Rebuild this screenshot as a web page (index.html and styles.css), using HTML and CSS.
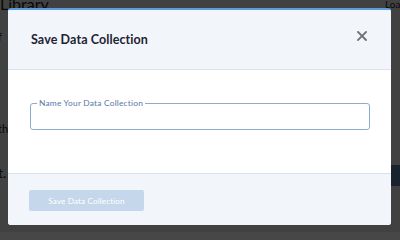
FILE: index.html
```html
<!DOCTYPE html>
<html>
<head>
<meta charset="utf-8">
<link rel="stylesheet" href="styles.css">
</head>
<body>
<div class="page">
  <div class="page-title">Library</div>
  <div class="page-load">Load</div>
  <div class="page-row r1">f</div>
  <div class="page-row r2">th</div>
  <div class="page-row r3">t.</div>
  <div class="page-block"></div>
</div>
<div class="overlay"></div>
<div class="modal">
  <div class="modal-header">
    <h2 class="modal-title">Save Data Collection</h2>
    <button class="close" aria-label="Close">
      <svg width="10" height="10" viewBox="0 0 10 10"><path d="M1 1L9 9M9 1L1 9" stroke="#707070" stroke-width="1.8" stroke-linecap="square"/></svg>
    </button>
  </div>
  <div class="modal-body">
    <fieldset class="field">
      <legend class="field-label">Name Your Data Collection</legend>
      <input class="field-input" type="text">
    </fieldset>
  </div>
  <div class="modal-footer">
    <button class="save-btn" disabled>Save Data Collection</button>
  </div>
</div>
</body>
</html>
```
FILE: styles.css
```css
html, body {
  margin: 0;
  padding: 0;
  width: 400px;
  height: 232px;
  overflow: hidden;
  font-family: Lato, "Open Sans", sans-serif;
}
.page {
  position: relative;
  width: 400px;
  height: 232px;
  background: #e8e8e8;
}
.page-title {
  position: absolute;
  left: 0;
  top: -6px;
  font-size: 16px;
  color: #222;
}
.page-load {
  position: absolute;
  right: -6px;
  top: -2px;
  font-size: 10px;
  color: #222;
}
.page-row {
  position: absolute;
  left: -2px;
  font-size: 11px;
  color: #222;
}
.r1 { top: 30px; }
.r2 { top: 122px; }
.r3 { top: 164px; font-size: 14px; }
.page-block {
  position: absolute;
  right: 0;
  top: 165px;
  width: 10px;
  height: 21px;
  background: #5a7aa8;
}
.overlay {
  position: absolute;
  inset: 0;
  background: rgba(0, 0, 0, 0.72);
}
.modal {
  position: absolute;
  left: 8px;
  top: 8px;
  width: 383px;
  height: 217px;
  border-top: 2px solid #5b9bdc;
  border-radius: 3px;
  background: #fff;
  display: flex;
  flex-direction: column;
  overflow: hidden;
  box-sizing: border-box;
}
.modal-header {
  height: 59px;
  background: #f2f5fa;
  border-bottom: 1px solid #dce2ea;
  display: flex;
  align-items: center;
  justify-content: space-between;
  padding: 0 24px 0 23px;
  box-sizing: content-box;
  flex: none;
}
.modal-title {
  margin: 0;
  font-size: 12.5px;
  font-weight: 700;
  color: #1e2332;
  letter-spacing: 0.1px;
}
.close {
  border: 0;
  background: none;
  padding: 0;
  width: 10px;
  height: 10px;
  display: flex;
  margin-bottom: 7px;
}
.modal-body {
  height: 103px;
  flex: none;
  padding: 29px 21px 0 22px;
  box-sizing: border-box;
}
.field {
  margin: 0;
  padding: 0 6px;
  border: 1.5px solid #8eabce;
  border-radius: 3px;
  height: 31px;
  box-sizing: border-box;
  display: block;
}
.field-label {
  font-size: 8.4px;
  color: #5879a6;
  padding: 0 2px;
  line-height: 8px;
  letter-spacing: 0.2px;
}
.field-input {
  border: 0;
  outline: none;
  width: 100%;
  height: 14px;
  background: transparent;
}
.modal-footer {
  flex: 1;
  background: #f2f5fa;
  border-top: 1px solid #dce2ea;
  padding: 16px 22px 0 21px;
}
.save-btn {
  display: block;
  width: 115px;
  height: 21px;
  border: 0;
  border-radius: 2px;
  background: #c4d7eb;
  color: #fff;
  font-family: Lato, "Open Sans", sans-serif;
  font-size: 8.2px;
  padding: 0;
  letter-spacing: 0.1px;
}
```
